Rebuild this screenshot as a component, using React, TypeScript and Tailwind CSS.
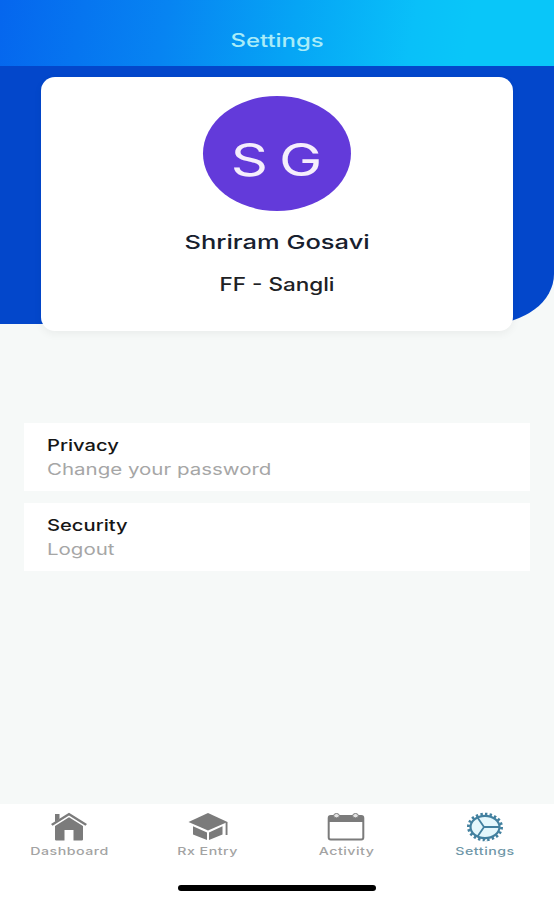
import React from "react";

const rows = [
  { title: "Privacy", sub: "Change your password" },
  { title: "Security", sub: "Logout" },
];

const HomeIcon = () => (
  <svg width="38" height="30" viewBox="0 0 38 30" fill="#7b7b7b">
    <path d="M5 2h4.500v5L5 10z" />
    <path d="M19 0.800 37 12l-1.600 1.700L19 3.600 2.600 13.700 1 12z" />
    <path d="M19 5.300 33 14v13.500q0 1-1.200 1H23.500V18h-9v10.500H6.200q-1.200 0-1.200-1V14z" />
  </svg>
);

const CapIcon = () => (
  <svg width="42" height="30" viewBox="0 0 42 30" fill="#7b7b7b">
    <path d="M21 1 40.500 10 21 18.500 1.500 10z" />
    <path d="M6 14.200 20 20.500v7.500L6 22.500zM22 20.500l13.500-6.300v8.300L22 28z" />
    <path d="M38.600 10h1.900V23h-1.900z" />
  </svg>
);

const CalendarIcon = () => (
  <svg width="38" height="30" viewBox="0 0 38 30" fill="none" stroke="#7b7b7b">
    <rect x="1.700" y="4" width="34.600" height="23.500" rx="2" strokeWidth="2" />
    <path d="M2 4h34v6H2z" fill="#7b7b7b" stroke="none" />
    <ellipse cx="9.500" cy="3.700" rx="2.800" ry="2.200" fill="#e4e4e4" strokeWidth="1" />
    <ellipse cx="28.500" cy="3.700" rx="2.800" ry="2.200" fill="#e4e4e4" strokeWidth="1" />
  </svg>
);

const GearIcon = () => (
  <svg width="38" height="30" viewBox="0 0 38 30" fill="none" stroke="#42809f">
    <ellipse cx="19" cy="15" rx="16.600" ry="12.900" strokeWidth="2.800" pathLength="100" strokeDasharray="2.600 2.400" />
    <ellipse cx="19" cy="15" rx="14.500" ry="11.200" fill="#e4f7fc" strokeWidth="2.200" />
    <path d="M18 15H33M18 15 11.500 5.500M18 15 11.500 24.500" strokeWidth="1.800" />
  </svg>
);

const tabs = [
  { label: "Dashboard", icon: <HomeIcon />, color: "text-[#a3a3a3]" },
  { label: "Rx Entry", icon: <CapIcon />, color: "text-[#a3a3a3]" },
  { label: "Activity", icon: <CalendarIcon />, color: "text-[#a3a3a3]" },
  { label: "Settings", icon: <GearIcon />, color: "text-[#6f97a8]" },
];

const App = () => {
  return (
    <main className="flex h-[900px] w-[554px] flex-col overflow-hidden bg-[#f6f9f8] font-['Inter',sans-serif]">
      <header className="flex h-[66px] shrink-0 justify-center bg-[linear-gradient(100deg,#0566ee_0%,#0784f2_30%,#06a5f5_53%,#09c0f9_74%,#09c6f9_84%)] pt-[29px]">
        <h1 className="scale-x-[1.33] text-[18px] leading-6 font-medium text-[#a9ecf8]">Settings</h1>
      </header>

      <section className="h-[258px] shrink-0 rounded-br-[66px_50px] bg-[#0347cb] px-[41px] pt-[11px]">
        <div className="flex h-[254px] w-[472px] flex-col items-center rounded-[14px] bg-white pt-[19px] shadow-[0_3px_8px_rgba(0,0,0,0.05)]">
          <div className="flex h-[115px] w-[148px] items-center justify-center rounded-[50%] bg-[#633ada] pt-3">
            <span className="scale-x-[1.29] text-[45px] leading-none text-[#f5eefc] [word-spacing:-4px]">S G</span>
          </div>
          <h2 className="mt-[20px] scale-x-[1.34] text-[19px] leading-6 font-medium text-[#17202e]">Shriram Gosavi</h2>
          <p className="mt-[18px] scale-x-[1.25] text-[18px] leading-6 font-medium text-[#202124]">FF - Sangli</p>
        </div>
      </section>

      <section className="mt-[99px] flex flex-col gap-3 px-6">
        {rows.map((row) => (
          <div key={row.title} className="flex h-[68px] w-[506px] flex-col items-start bg-white pt-[10px] pl-[23px]">
            <h3 className="origin-left scale-x-[1.26] text-[16px] leading-6 font-medium text-[#161616]">{row.title}</h3>
            <p className="origin-left scale-x-[1.28] text-[16px] leading-6 text-[#a6a6a6]">{row.sub}</p>
          </div>
        ))}
      </section>

      <nav className="mt-auto flex h-[96px] shrink-0 flex-col items-center bg-white">
        <ul className="flex w-full pt-[8px]">
          {tabs.map((tab) => (
            <li key={tab.label} className="flex flex-1 flex-col items-center">
              {tab.icon}
              <span className={`mt-px scale-x-[1.29] text-[11px] leading-4 font-medium tracking-[0.4px] ${tab.color}`}>{tab.label}</span>
            </li>
          ))}
        </ul>
        <div className="mt-[26px] h-[6px] w-[198px] rounded-full bg-black" />
      </nav>
    </main>
  );
};

export default App;
